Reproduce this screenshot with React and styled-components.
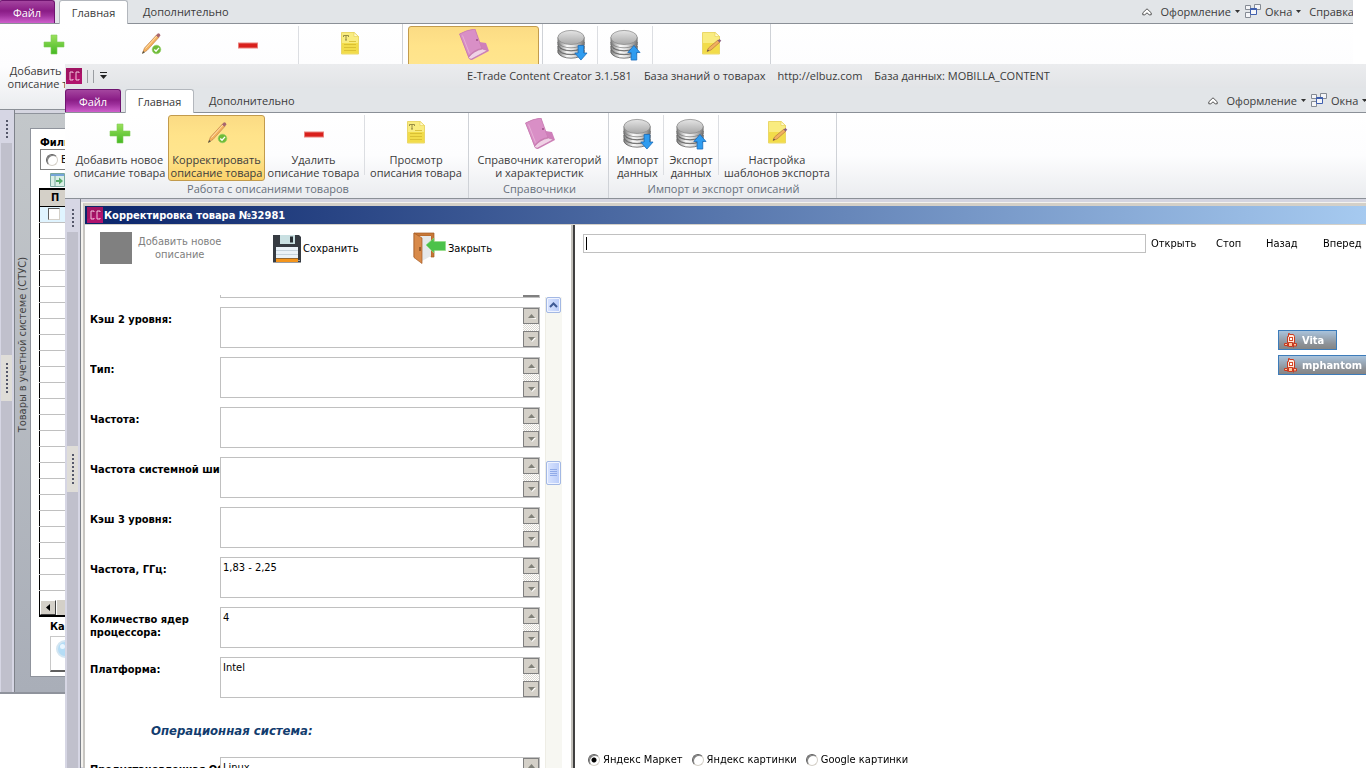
import { useId } from 'react';
import styled, { createGlobalStyle, css } from 'styled-components';

const UI = "'Open Sans', 'Noto Sans', sans-serif";
const FORM = "'DejaVu Sans Condensed', 'DejaVu Sans', sans-serif";

const GlobalStyle = createGlobalStyle`
  *, *::before, *::after { box-sizing: border-box; }
  html, body { margin: 0; background: #fff; }
  body { overflow: hidden; }
  button, input, textarea { font: inherit; color: inherit; }
  button { padding: 0; margin: 0; border: 0; background: none; }
  svg { display: block; flex-shrink: 0; }
`;

const Desktop = styled.main`
  position: relative;
  height: 100vh;
  overflow: hidden;
  background: #fff;
  font-family: ${UI};
  font-size: 11px;
  line-height: 13px;
  color: #3b3b3b;
`;

const Window = styled.section`
  position: absolute;
  overflow: hidden;
  display: flex;
  flex-direction: column;
  background: #d5d5e0;
`;

const BackWindow = styled(Window)`
  top: -1px;
  left: -1px;
  right: 13px;
  height: 695px;
  border-bottom: 2px solid #8f939c;
`;

const FrontWindow = styled(Window)`
  top: 64px;
  left: 65px;
  right: -53px;
  bottom: 0;
`;

/* ---------- title bar ---------- */

const TitleBar = styled.header`
  display: flex;
  align-items: center;
  height: 24px;
  flex-shrink: 0;
  padding-left: 1px;
  background: linear-gradient(#ebecee, #e2e4e7);
`;

const QuickAccess = styled.div`
  display: flex;
  align-items: center;
  gap: 5px;
`;

const QuickSeparator = styled.span`
  width: 1px;
  height: 13px;
  background: #9a9da2;
`;

const TitleText = styled.h1`
  flex: 1;
  display: flex;
  justify-content: center;
  gap: 12px;
  margin: 0;
  padding: 0 10px 2px 0;
  font-size: 11px;
  font-weight: 400;
  white-space: nowrap;
`;

/* ---------- ribbon ---------- */

const TabBar = styled.nav`
  display: flex;
  align-items: flex-end;
  height: 25px;
  flex-shrink: 0;
  padding-top: 1px;
  border-bottom: 1px solid #8b9097;
  background: #e2e5e8;
`;

const Tab = styled.button`
  height: 24px;
  padding: 0 15px;
  white-space: nowrap;

  ${({ $kind }) => $kind === 'file' && css`
    width: 56px;
    height: 23px;
    margin-right: 4px;
    padding: 0;
    color: #fff;
    border: 1px solid #6f1470;
    border-bottom: 0;
    border-radius: 3px 3px 0 0;
    background: linear-gradient(#a4459f, #8a1c86 45%, #9d2f9b 65%, #cf60cc);
  `}
  ${({ $kind }) => $kind === 'active' && css`
    width: 69px;
    margin-bottom: -1px;
    padding: 0;
    border: 1px solid #b3b7bd;
    border-bottom: 0;
    border-radius: 3px 3px 0 0;
    background: #fff;
  `}
`;

const TabMenu = styled.div`
  display: flex;
  align-items: center;
  height: 23px;
  margin-left: auto;
  margin-right: -1px;
  white-space: nowrap;
`;

const MenuButton = styled.button`
  display: flex;
  align-items: center;
  gap: 4px;
  margin-left: ${({ $gap }) => $gap}px;
`;

const RibbonBody = styled.div`
  display: flex;
  height: 86px;
  flex-shrink: 0;
  padding-left: 1px;
  border-bottom: 1px solid #8b9097;
  background: linear-gradient(#fff, #fdfdfe 50%, #eaecef);
`;

const Group = styled.div`
  display: flex;
  flex-direction: column;
  padding: 2px 3px 0 5px;
  border-right: 1px solid #cfd2d7;
`;

const GroupButtons = styled.div`
  display: flex;
`;

const GroupTitle = styled.div`
  padding-top: 1px;
  text-align: center;
  color: #67707c;
`;

const RibbonButton = styled.button`
  display: flex;
  flex-direction: column;
  align-items: center;
  gap: 3px;
  width: ${({ $width }) => $width}px;
  height: 66px;
  padding-top: 2px;
  border: 1px solid transparent;
  border-radius: 3px;
  line-height: 13px;
  white-space: pre;

  ${({ $selected }) => $selected && css`
    border-color: #c29b4d;
    background: linear-gradient(#fbdb84, #ffe38a 30%, #ffe58e 60%, #fbd26b);
  `}
`;

const ButtonDivider = styled.span`
  width: 1px;
  height: 60px;
  margin: 0 2px;
  background: #dcdee2;
`;

/* ---------- docking strips ---------- */

const Body = styled.div`
  flex: 1;
  min-height: 0;
  display: flex;
`;

const DockStrip = styled.aside`
  display: flex;
  flex-direction: column;
  align-items: center;
  width: 16px;
  flex-shrink: 0;
  padding: 10px 2px 0 2px;
  border-right: 1px solid #7e828a;
  background: #d6d6e4;
`;

const Dots = styled.span`
  width: 2px;
  height: ${({ $height }) => $height}px;
  background: repeating-linear-gradient(#55586a 0 2px, transparent 2px 4px);
`;

const StripTrack = styled.div`
  align-self: stretch;
  flex: 1;
  display: flex;
  flex-direction: column;
  align-items: stretch;
  margin-top: 5px;
  padding-top: ${({ $top }) => $top}px;
  background: #c0c0cc;
`;

const Splitter = styled.div`
  display: flex;
  align-items: center;
  justify-content: center;
  height: 46px;
  background: #dfddd8;
`;

/* ---------- back window content ---------- */

const SideTab = styled.div`
  width: 15px;
  flex-shrink: 0;
  padding-top: 143px;
`;

const SideLabel = styled.span`
  display: block;
  writing-mode: vertical-rl;
  transform: rotate(180deg);
  white-space: nowrap;
  font-family: ${FORM};
  line-height: 15px;
  color: #444;
`;

const Dock = styled.div`
  flex: 1;
  display: flex;
  margin-top: 3px;
  border-top: 1px solid #8f939c;
  background: linear-gradient(#c3c7ca, #a9aeb8);
`;

const Products = styled.div`
  flex: 1;
  display: flex;
  flex-direction: column;
  margin: 14px 0 15px;
  padding: 7px 0 0 8px;
  border: 1px solid #8f939c;
  background: #fff;
  font-family: ${FORM};
  color: #000;
`;

const Caption = styled.div`
  font-weight: 700;
  margin-left: ${({ $indent = 1 }) => $indent}px;
`;

const FilterBox = styled.div`
  display: flex;
  align-items: center;
  height: 21px;
  margin: 0 0 3px 1px;
  padding-left: 5px;
  border: 1px solid #808080;
`;

const RadioLabel = styled.label`
  display: flex;
  align-items: center;
  gap: 3px;
  height: 13px;
  overflow: hidden;
  white-space: nowrap;
`;

const Radio = styled.input`
  appearance: none;
  width: 12px;
  height: 12px;
  flex-shrink: 0;
  margin: 0;
  border: 1px solid;
  border-color: #606060 #d4d0c8 #d4d0c8 #606060;
  border-radius: 50%;
  background: #fff;
  box-shadow: inset 1px 1px 0 #808080;

  &:checked {
    background: radial-gradient(circle, #000 0 2px, #fff 3px);
  }
`;

const GridToolbar = styled.div`
  padding: 0 0 1px 11px;
`;

const Grid = styled.table`
  flex-shrink: 0;
  width: 100%;
  border-collapse: collapse;
  border: 1px solid #000;
  border-top-width: 2px;
  table-layout: fixed;
`;

const GridHead = styled.th`
  height: 17px;
  padding: 0 0 0 11px;
  text-align: left;
  font-weight: 700;
  background: #d4d0c8;
  border-bottom: 1px solid #000;
`;

const GridCell = styled.td`
  height: 16px;
  padding: 0 0 0 8px;
  line-height: 0;
  border-bottom: 1px solid #c0c0c0;
  background: ${({ $current }) => ($current ? '#e0f4ff' : '#fff')};
`;

const GridCheck = styled.input`
  appearance: none;
  width: 12px;
  height: 12px;
  margin: 0;
  border: 1px solid;
  border-color: #606060 #d4d0c8 #d4d0c8 #606060;
  background: #fff;
`;

const GridScroll = styled.div`
  display: flex;
  height: 26px;
  margin-bottom: 3px;
  padding-top: 9px;
  border: 1px solid #000;
  border-width: 0 0 2px 1px;
`;

const ClassicButton = styled.button`
  display: flex;
  align-items: center;
  justify-content: center;
  width: 16px;
  height: 15px;
  flex-shrink: 0;
  background: #d4d0c8;
  border: 1px solid;
  border-color: #fff #404040 #404040 #fff;
`;

const GridThumb = styled.span`
  flex: 1;
  background: #d4d0c8;
  border-left: 1px solid #fff;
`;

const CardButton = styled.button`
  display: flex;
  align-items: center;
  height: 36px;
  width: 120px;
  margin: 3px 0 0 11px;
  padding: 0 0 8px 5px;
  border: 1px solid #c8c8c8;
  border-bottom: 2px solid #606060;
`;

/* ---------- product editor ---------- */

const Editor = styled.div`
  flex: 1;
  min-width: 0;
  display: flex;
  flex-direction: column;
  margin-top: 4px;
  border-top: 3px solid #d4d0c8;
  border-left: 2px solid #c8c6c2;
  box-shadow: -2px -1px 0 #f4f2ee;
  margin-left: 2px;
  background: #fff;
  font-family: ${FORM};
  color: #000;
`;

const EditorTitle = styled.h2`
  display: flex;
  align-items: center;
  gap: 1px;
  height: 19px;
  flex-shrink: 0;
  margin: 0;
  padding-left: 2px;
  border-bottom: 1px solid #d4d0c8;
  color: #fff;
  font-size: 11px;
  font-weight: 700;
  background: linear-gradient(90deg, #0a246a, #a6caf0 96%);
`;

const EditorBody = styled.div`
  flex: 1;
  min-height: 0;
  display: flex;
`;

const LeftPane = styled.div`
  display: flex;
  flex-direction: column;
  width: 490px;
  flex-shrink: 0;
  border-right: 2px solid #404040;
  box-shadow: inset -2px 0 0 #c4c2bc;
`;

const Actions = styled.div`
  display: flex;
  align-items: center;
  height: 70px;
  flex-shrink: 0;
  padding: 0 0 24px 15px;
`;

const Action = styled.button`
  display: flex;
  align-items: center;
  gap: ${({ $gap = 2 }) => $gap}px;
  width: ${({ $width }) => $width}px;
  height: 32px;
  white-space: pre;
  text-align: center;

  &:disabled { color: #808080; }
`;

const GraySquare = styled.span`
  width: 32px;
  height: 32px;
  background: #808080;
`;

const FormArea = styled.div`
  flex: 1;
  min-height: 0;
  display: flex;
  overflow: hidden;
`;

const Fields = styled.form`
  width: 455px;
  flex-shrink: 0;
  display: flex;
  flex-direction: column;
  gap: 9px;
  padding-left: 5px;
`;

const Row = styled.div`
  display: flex;
  flex-shrink: 0;
  height: 41px;
`;

/* bottom edge of the field that is scrolled out of view */
const ScrolledRow = styled.div`
  display: flex;
  align-items: flex-end;
  flex-shrink: 0;
  height: 3px;
  margin-left: 130px;
  border: 1px solid #c0c0c0;
  border-top: 0;

  &::after {
    content: '';
    width: 16px;
    height: 2px;
    margin-left: auto;
    background: #808080;
  }
`;

const FieldLabel = styled.label`
  width: 130px;
  flex-shrink: 0;
  padding-top: 6px;
  overflow: hidden;
  font-weight: 700;
  white-space: pre;
`;

const FieldBox = styled.div`
  flex: 1;
  display: flex;
  border: 1px solid #c0c0c0;
`;

const FieldInput = styled.textarea`
  flex: 1;
  min-width: 0;
  resize: none;
  border: 0;
  outline: 0;
  padding: 3px 2px;
  overflow: hidden;
`;

const FieldScroll = styled.div`
  display: flex;
  flex-direction: column;
  justify-content: space-between;
  width: 16px;
  background: repeating-conic-gradient(#dcd9d2 0 25%, #fff 0 50%) 0 0 / 2px 2px;
`;

const ScrollButton = styled.button`
  display: flex;
  align-items: center;
  justify-content: center;
  width: 16px;
  height: 16px;
  background: #d4d0c8;
  border: 1px solid #808080;
`;

const Section = styled.h3`
  height: 59px;
  flex-shrink: 0;
  margin: -9px 0;
  padding: 25px 0 0 61px;
  line-height: 15px;
  font-size: 13px;
  font-style: italic;
  font-weight: 700;
  color: #123c6e;
`;

const PaneScroll = styled.div`
  display: flex;
  flex-direction: column;
  width: 17px;
  margin: 2px 0 0 5px;
  background: #f7f7f2;
  border-left: 1px solid #eeede5;
`;

const PaneScrollButton = styled.button`
  display: flex;
  align-items: center;
  justify-content: center;
  width: 15px;
  height: ${({ $height }) => $height}px;
  margin-bottom: ${({ $after = 0 }) => $after}px;
  border: 1px solid #a3b8e4;
  border-radius: 2px;
  background: linear-gradient(90deg, #d9e4ff, #b9cbf8);
  box-shadow: inset 0 0 0 1px #f0f4ff;
`;

const RightPane = styled.div`
  flex: 1;
  min-width: 0;
  display: flex;
  flex-direction: column;
  padding: 9px 0 2px 8px;
`;

const AddressRow = styled.div`
  display: flex;
  align-items: center;
`;

/* the text cursor is painted as a background, the native one blinks */
const Address = styled.input`
  flex: 1;
  min-width: 0;
  height: 19px;
  margin-right: 5px;
  padding: 0 2px;
  border: 1px solid #c0c0c0;
  outline: 0;
  caret-color: transparent;
  background: linear-gradient(#000, #000) 2px 2px / 1px 13px no-repeat #fff;
`;

const NavButton = styled.button`
  width: ${({ $width }) => $width}px;
  height: 19px;
  text-align: left;
`;

const WebPage = styled.div`
  flex: 1;
`;

const Sources = styled.div`
  display: flex;
  gap: 9px;
  padding-left: 5px;
`;

/* floating contact tags above the windows */
const Contacts = styled.div`
  position: absolute;
  top: 330px;
  right: 0;
  width: 88px;
  display: flex;
  flex-direction: column;
  align-items: flex-start;
  gap: 5px;
  overflow: hidden;
`;

const Contact = styled.button`
  display: flex;
  align-items: center;
  gap: 5px;
  height: 20px;
  padding: 0 12px 0 5px;
  border: 1px solid #3d7cba;
  background: linear-gradient(#a9c3dc, #8d9298 70%, #858585);
  color: #fff;
  font-family: ${FORM};
  font-weight: 700;
`;

/* ---------- icons ---------- */

const PlusIcon = () => (
  <svg width="32" height="32" viewBox="0 0 32 32">
    <defs>
      <linearGradient id="plus" x2="0" y2="1">
        <stop stopColor="#9be05c" />
        <stop offset="1" stopColor="#45b824" />
      </linearGradient>
    </defs>
    <path d="M13 6h6v7h7v5h-7v7h-6v-7H6v-5h7z" fill="url(#plus)" stroke="#7fce58" strokeWidth=".6" />
  </svg>
);

const PencilIcon = () => (
  <svg width="32" height="32" viewBox="0 0 32 32">
    <path d="M7.500 24l2-5L21.500 6l2.500 2.200L12 21.500z" fill="#f5b25c" stroke="#c08450" strokeWidth=".7" />
    <path d="M10.500 19.500L22 7" stroke="#ffe0b0" />
    <path d="M21 6.500l2-2.300q2 0 2.500 2.300l-2 2.300z" fill="#a8666e" />
    <path d="M7 25l1.200-3 1.700 1.500z" fill="#554" />
    <circle cx="21.500" cy="20.500" r="4.300" fill="#6fbb38" stroke="#8fce62" strokeWidth=".6" />
    <path d="M19.300 20.500l1.700 1.700 3-3.300" fill="none" stroke="#fff" strokeWidth="1.400" />
  </svg>
);

const MinusIcon = () => (
  <svg width="32" height="32" viewBox="0 0 32 32">
    <rect x="6.500" y="14" width="19" height="5" fill="#d9201c" stroke="#e9817c" />
  </svg>
);

const Sheet = () => (
  <>
    <path d="M7.500 3.500h12.500l4.500 4V25h-17z" fill="#f9ec80" stroke="#ead768" />
    <path d="M8 14h16v10.500H8z" fill="#f0d83c" opacity=".8" />
    <path d="M20 3.500v4h4.500z" fill="#fffbd0" stroke="#e5cf52" strokeWidth=".6" />
  </>
);

const SheetIcon = () => (
  <svg width="32" height="32" viewBox="0 0 32 32">
    <Sheet />
    <path d="M9.500 8V6.500h5V8M12 6.500V11m-1 0h2" fill="none" stroke="#8d8440" strokeWidth=".9" />
    <path d="M15 12.500h7M10 15.500h12M10 18.500h12M10 21.500h12" stroke="#d3b92e" strokeWidth=".8" />
  </svg>
);

const SheetPencilIcon = () => (
  <svg width="32" height="32" viewBox="0 0 32 32">
    <Sheet />
    <path d="M12 22.500l1.500-3.500L23 11l2 2-9 8z" fill="#f0b060" stroke="#b87840" strokeWidth=".7" />
    <path d="M22.500 11.500l2-1.500 1.800 1.800-1.800 1.700z" fill="#8c6280" />
    <path d="M12 22.500l.7-2 1.500 1.300z" fill="#554" />
  </svg>
);

const FolderIcon = () => (
  <svg width="32" height="32" viewBox="0 0 32 32">
    <path d="M1.500 5q7-4 15.500-5l4.500 13 6.500 1 3 8-17 9q-2.500 0-3.500-2z" fill="#cf82bb" />
    <path d="M1.500 5q7-4 15.500-5l7 19.500q-8 1-13.500 8z" fill="#d98fc6" stroke="#c478ae" strokeWidth=".7" />
    <path d="M10.500 28.500q5.500-7 14-8.500l5 1.500L13.500 30q-2 .5-3-1.500" fill="#f0d2e6" stroke="#bd6fa5" strokeWidth=".6" />
    <path d="M21 13.500l6.500 1.500 2.500 6.500-5-1.500z" fill="#cf7fba" />
    <circle cx="19" cy="11" r="1" fill="#9b4c86" />
    <path d="M4.500 6.500l7 18" stroke="#e6aed6" />
  </svg>
);

const DbIcon = ({ up }) => (
  <svg width="32" height="32" viewBox="0 0 34 34">
    <defs>
      <linearGradient id="metal" x2="1" y2="0">
        <stop stopColor="#7a7a7a" />
        <stop offset=".35" stopColor="#fafafa" />
        <stop offset=".6" stopColor="#e0e0e0" />
        <stop offset="1" stopColor="#777" />
      </linearGradient>
      <linearGradient id="lid" x2="0" y2="1">
        <stop stopColor="#e4e4e4" />
        <stop offset="1" stopColor="#a8a8a8" />
      </linearGradient>
    </defs>
    {[22, 18, 14].map((y) => (
      <path
        key={y}
        d={`M2 ${y}v3c3 8 25 8 28 0v-3c-3 7-25 7-28 0z`}
        fill="url(#metal)"
        stroke="#555"
        strokeWidth=".8"
      />
    ))}
    <path d="M2 9v5c3 8 25 8 28 0V9z" fill="url(#metal)" stroke="#777" strokeWidth=".7" />
    <ellipse cx="16" cy="9" rx="14" ry="7.500" fill="url(#lid)" stroke="#8a8a8a" strokeWidth=".8" />
    <path
      d={up ? 'M23.500 33v-8H20l6.500-7.500L33 25h-3.500v8z' : 'M23.500 17.500v8H20l6.500 7.500 6.500-7.500h-3.500v-8z'}
      fill="#2f9cf0"
      stroke="#1468b8"
      strokeWidth=".8"
    />
  </svg>
);

const CcIcon = () => (
  <svg width="16" height="16" viewBox="0 0 16 16">
    <rect width="16" height="16" fill="#b0136c" />
    <path d="M0 0h16v5L0 12z" fill="#8f1458" opacity=".5" />
    <path d="M7 5V4H4v8h3v-1M13 5V4h-3v8h3v-1" fill="none" stroke="#f2c6de" />
  </svg>
);

const QuickArrow = () => (
  <svg width="9" height="8" viewBox="0 0 9 8">
    <path d="M1 .500h7" stroke="#222" />
    <path d="M1 3h7L4.500 7z" fill="#222" />
  </svg>
);

const DownArrow = () => (
  <svg width="5" height="3" viewBox="0 0 5 3">
    <path d="M0 0h5L2.500 3z" fill="#333" />
  </svg>
);

const CollapseIcon = () => (
  <svg width="10" height="8" viewBox="0 0 10 8">
    <path d="M5 .800L.800 4.800v2h2L5 4.800l2.200 2h2v-2z" fill="#fff" stroke="#444" strokeWidth=".9" />
  </svg>
);

const WindowsIcon = () => (
  <svg width="16" height="15" viewBox="0 0 16 15">
    <g fill="#f4f5f8" stroke="#858b94">
      <path d="M.500 1.500h5v4h-5zM9.500.500h6v5h-6zM.500 8.500h5v5h-5z" />
      <path d="M5.500 4.500h6v6h-6z" stroke="#3f5fae" />
    </g>
    <path d="M5.500 5h6" stroke="#3f5fae" strokeWidth="2" />
  </svg>
);

const Triangle = ({ down }) => (
  <svg width="9" height="6" viewBox="0 0 9 6">
    <path d={down ? 'M2 2h7L5 6z' : 'M2 6h7v-1z'} fill="#fff" />
    <path d={down ? 'M1 1h7L4.500 5z' : 'M1 5h7L4.500 1z'} fill="#808078" />
  </svg>
);

const FloppyIcon = () => (
  <svg width="28" height="29" viewBox="0 0 28 29">
    <path d="M0 1h26l2 2v25.500H0z" fill="#363b42" />
    <path d="M7 1h15v9H7z" fill="#c9e0e2" />
    <path d="M17 2.500h3v6h-3z" fill="#2a3036" />
    <path d="M3 13h22v11H3z" fill="#eaf2f8" />
    <path d="M3 16.500h22M3 20.500h22" stroke="#c4d2dc" />
    <path d="M3 24.500h22V28H3z" fill="#f4951c" />
    <path d="M25.500 26h1v1h-1z" fill="#fff" />
  </svg>
);

const DoorIcon = () => (
  <svg width="33" height="32" viewBox="0 0 33 32">
    <path d="M1 1h20v24h-3V4H4v20L1 25z" fill="#c87838" stroke="#a55a22" strokeWidth=".7" />
    <path d="M5 4h13v20l-9 5z" fill="#e5e8ea" />
    <path d="M1 1l8 5v25.500l-8-6z" fill="#d88a4a" stroke="#a55a22" strokeWidth=".7" />
    <path d="M7 15v4" stroke="#5c3010" />
    <path d="M13 13l8-7v3.500h11.500v9H21V21z" fill="#4cc24a" stroke="#8edc80" strokeWidth=".6" />
  </svg>
);

const ExportIcon = () => (
  <svg width="15" height="14" viewBox="0 0 15 14">
    <path d="M.500.500h14v13H.500z" fill="#d9efe6" stroke="#7aa8a0" />
    <path d="M1 1h13v2H1z" fill="#74a5d8" />
    <path d="M5 3v10" stroke="#7aa8a0" />
    <path d="M6 7h3V4.500L13 8l-4 3.500V9H6z" fill="#55a96a" />
  </svg>
);

const LensIcon = () => (
  <svg width="18" height="18" viewBox="0 0 18 18">
    <circle cx="9" cy="9" r="8" fill="#b5dcf5" stroke="#d4e6f2" strokeWidth="2" />
    <circle cx="6.500" cy="6.500" r="2.500" fill="#e9f6ff" />
  </svg>
);

const PhoneIcon = () => (
  <svg width="13" height="15" viewBox="0 0 13 15">
    <path d="M3.500 10V3.500h1v-3h1v1h4l1 2V10z" fill="#ffe9dc" stroke="#c83a20" />
    <rect x="5.500" y="4.500" width="3" height="3" fill="#fff" stroke="#d84a28" />
    <path d="M3.500 13.500v-3h-3v2h3M4.500 9.500h4v4h-4zM9.500 14.500v-4h3v2.500h-3" fill="#ffc49a" stroke="#c83a20" />
  </svg>
);

/* ---------- parts ---------- */

const GROUPS = [
  {
    id: 'products',
    title: 'Работа с описаниями товаров',
    buttons: [
      { id: 'add', text: 'Добавить новое\nописание товара', icon: PlusIcon, width: 97 },
      { id: 'edit', text: 'Корректировать\nописание товара', icon: PencilIcon, width: 97 },
      { id: 'remove', text: 'Удалить\nописание товара', icon: MinusIcon, width: 97 },
      { id: 'view', text: 'Просмотр\nописания товара', icon: SheetIcon, width: 98, divider: true },
    ],
  },
  {
    id: 'catalogs',
    title: 'Справочники',
    buttons: [
      { id: 'catalog', text: 'Справочник категорий\nи характеристик', icon: FolderIcon, width: 131 },
    ],
  },
  {
    id: 'exchange',
    title: 'Импорт и экспорт описаний',
    buttons: [
      { id: 'import', text: 'Импорт\nданных', icon: () => <DbIcon />, width: 47 },
      { id: 'export', text: 'Экспорт\nданных', icon: () => <DbIcon up />, width: 50, divider: true },
      { id: 'setup', text: 'Настройка\nшаблонов экспорта', icon: SheetPencilIcon, width: 112, divider: true },
    ],
  },
];

const FIELDS = [
  { label: 'Кэш 2 уровня:', value: '' },
  { label: 'Тип:', value: '' },
  { label: 'Частота:', value: '' },
  { label: 'Частота системной шины:', value: '' },
  { label: 'Кэш 3 уровня:', value: '' },
  { label: 'Частота, ГГц:', value: '1,83 - 2,25' },
  { label: 'Количество ядер\nпроцессора:', value: '4' },
  { label: 'Платформа:', value: 'Intel' },
];

const EMPTY_ROWS = Array.from({ length: 23 }, (_, i) => i);

// captions: ids of the buttons and groups whose text is visible, all when omitted
function Ribbon({ selected, captions }) {
  const hasCaption = (id) => !captions || captions.includes(id);

  return (
    <>
      <TabBar>
        <Tab $kind="file">Файл</Tab>
        <Tab $kind="active">Главная</Tab>
        <Tab>Дополнительно</Tab>
        <TabMenu>
          <MenuButton aria-label="Свернуть ленту"><CollapseIcon /></MenuButton>
          <MenuButton $gap={9}>Оформление <DownArrow /></MenuButton>
          <MenuButton $gap={5}><WindowsIcon /> Окна <DownArrow /></MenuButton>
          <MenuButton $gap={8}>Справка</MenuButton>
        </TabMenu>
      </TabBar>
      <RibbonBody>
        {GROUPS.map((group) => (
          <Group key={group.id}>
            <GroupButtons>
              {group.buttons.map(({ id, text, icon: Icon, width, divider }) => [
                divider && <ButtonDivider key={`${id}-divider`} />,
                <RibbonButton
                  key={id}
                  $width={width}
                  $selected={id === selected}
                  aria-label={text.replace('\n', ' ')}
                >
                  <Icon />
                  {hasCaption(id) && text}
                </RibbonButton>,
              ])}
            </GroupButtons>
            {hasCaption(group.id) && <GroupTitle>{group.title}</GroupTitle>}
          </Group>
        ))}
      </RibbonBody>
    </>
  );
}

function Strip({ top }) {
  return (
    <DockStrip>
      <Dots $height={18} />
      <StripTrack $top={top}>
        <Splitter><Dots $height={30} /></Splitter>
      </StripTrack>
    </DockStrip>
  );
}

function Field({ label, value }) {
  const id = useId();
  return (
    <Row>
      <FieldLabel htmlFor={id}>{label}</FieldLabel>
      <FieldBox>
        <FieldInput id={id} defaultValue={value} />
        <FieldScroll>
          <ScrollButton type="button" aria-label="Вверх"><Triangle /></ScrollButton>
          <ScrollButton type="button" aria-label="Вниз"><Triangle down /></ScrollButton>
        </FieldScroll>
      </FieldBox>
    </Row>
  );
}

function ProductsWindow() {
  return (
    <BackWindow>
      <Ribbon selected="catalog" captions={['add']} />
      <Body>
        <Strip top={212} />
        <Dock>
          <SideTab><SideLabel>Товары в учетной системе (СТУС)</SideLabel></SideTab>
          <Products>
            <Caption>Фильтр</Caption>
            <FilterBox>
              <RadioLabel><Radio type="radio" name="filter" />Все</RadioLabel>
            </FilterBox>
            <GridToolbar><ExportIcon /></GridToolbar>
            <Grid>
              <thead>
                <tr><GridHead>П</GridHead></tr>
              </thead>
              <tbody>
                <tr>
                  <GridCell $current><GridCheck type="checkbox" aria-label="П" /></GridCell>
                </tr>
                {EMPTY_ROWS.map((row) => <tr key={row}><GridCell /></tr>)}
              </tbody>
            </Grid>
            <GridScroll>
              <ClassicButton aria-label="Влево">
                <svg width="4" height="7" viewBox="0 0 4 7"><path d="M4 0v7L0 3.500z" /></svg>
              </ClassicButton>
              <GridThumb />
            </GridScroll>
            <Caption $indent={11}>Карточка</Caption>
            <CardButton aria-label="Карточка"><LensIcon /></CardButton>
          </Products>
        </Dock>
      </Body>
    </BackWindow>
  );
}

function EditorWindow() {
  return (
    <FrontWindow>
      <TitleBar>
        <QuickAccess>
          <CcIcon />
          <QuickSeparator />
          <QuickSeparator />
          <QuickArrow />
        </QuickAccess>
        <TitleText>
          <span>E-Trade Content Creator 3.1.581</span>
          <span>База знаний о товарах</span>
          <span>http://elbuz.com</span>
          <span>База данных: MOBILLA_CONTENT</span>
        </TitleText>
      </TitleBar>
      <Ribbon selected="edit" />
      <Body>
        <Strip top={214} />
        <Editor>
          <EditorTitle><CcIcon />Корректировка товара №32981</EditorTitle>
          <EditorBody>
            <LeftPane>
              <Actions>
                <Action $width={173} $gap={6} disabled><GraySquare />{'Добавить новое\nописание'}</Action>
                <Action $width={140}><FloppyIcon />Сохранить</Action>
                <Action $width={90}><DoorIcon />Закрыть</Action>
              </Actions>
              <FormArea>
                <Fields>
                  <ScrolledRow />
                  {FIELDS.map((field) => <Field key={field.label} {...field} />)}
                  <Section>Операционная система:</Section>
                  <Field label="Предустановленная ОС:" value="Linux" />
                </Fields>
                <PaneScroll>
                  <PaneScrollButton $height={16} $after={148} aria-label="Вверх">
                    <svg width="9" height="6" viewBox="0 0 9 6">
                      <path d="M1 5l3.500-3.500L8 5" fill="none" stroke="#3f5a94" strokeWidth="2" />
                    </svg>
                  </PaneScrollButton>
                  <PaneScrollButton $height={24} aria-label="Прокрутка">
                    <svg width="7" height="8" viewBox="0 0 7 8">
                      <path d="M0 .500h7M0 2.500h7M0 4.500h7M0 6.500h7" stroke="#90aae8" />
                    </svg>
                  </PaneScrollButton>
                </PaneScroll>
              </FormArea>
            </LeftPane>
            <RightPane>
              <AddressRow>
                <Address aria-label="Адрес" autoFocus />
                <NavButton $width={65}>Открыть</NavButton>
                <NavButton $width={50}>Стоп</NavButton>
                <NavButton $width={57}>Назад</NavButton>
                <NavButton $width={96}>Вперед</NavButton>
              </AddressRow>
              <WebPage />
              <Sources>
                <RadioLabel><Radio type="radio" name="source" defaultChecked />Яндекс Маркет</RadioLabel>
                <RadioLabel><Radio type="radio" name="source" />Яндекс картинки</RadioLabel>
                <RadioLabel><Radio type="radio" name="source" />Google картинки</RadioLabel>
              </Sources>
            </RightPane>
          </EditorBody>
        </Editor>
      </Body>
    </FrontWindow>
  );
}

export default function App() {
  return (
    <Desktop>
      <GlobalStyle />
      <ProductsWindow />
      <EditorWindow />
      <Contacts>
        <Contact><PhoneIcon />Vita</Contact>
        <Contact><PhoneIcon />mphantom</Contact>
      </Contacts>
    </Desktop>
  );
}
